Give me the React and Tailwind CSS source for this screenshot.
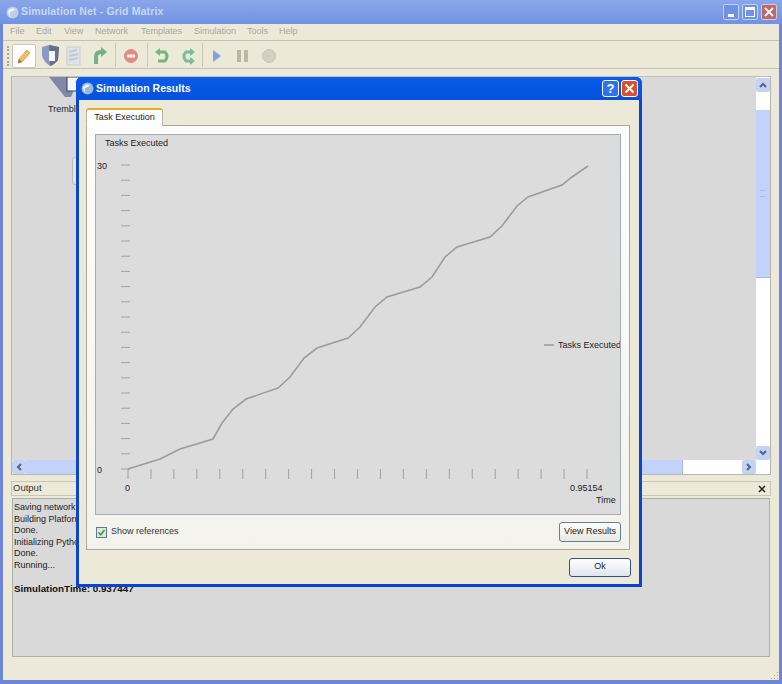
const font = { fontFamily: '"Liberation Sans", Arial, sans-serif' };

const menus = ['File', 'Edit', 'View', 'Network', 'Templates', 'Simulation', 'Tools', 'Help'];
const menuGaps = ['w-[26px]', 'w-[28px]', 'w-[31px]', 'w-[46px]', 'w-[53px]', 'w-[53px]', 'w-[32px]', 'w-[30px]'];

const outputLines = ['Saving network...', 'Building Platform...', 'Done.', 'Initializing Python...', 'Done.', 'Running...'];

const linePoints =
  '128,469 160,459 180,449 213,439 222,423 233,409 246,399 278,388 290,377 304,358 317,348 348,338 360,327 375,307 387,297 420,287 432,277 445,257 457,247 490,237 502,226 517,206 528,197 562,185 572,177 588,166';

function Separator() {
  return <div className="w-px h-[24px] bg-[#c9c6b4]" />;
}

function ToolbarIcons() {
  return (
    <svg width="270" height="24" viewBox="0 0 270 24" className="block">
      {/* shield / server */}
      <path d="M1 3 L8 1 L18 3 L17 16 Q13 21 9 22 Q3 18 1 12 Z" fill="#8a9ac4" />
      <path d="M8 1 L18 3 L17 16 Q13 21 9 22 Z" fill="#6a7088" />
      <rect x="8" y="7" width="6" height="10" fill="#f4f6fa" />
      {/* faded document */}
      <rect x="26" y="3" width="13" height="18" fill="#dfe3e4" stroke="#c8cdd0" />
      <path d="M28 8 L36 6 M28 12 L37 10 M28 16 L37 14" stroke="#bccbdc" strokeWidth="2" />
      {/* green up arrow */}
      <path d="M55 20 L55 13 Q55 8 60 8" fill="none" stroke="#6fb488" strokeWidth="4" />
      <path d="M60 3 L66 8 L60 13 Z" fill="#6fb488" />
      {/* stop */}
      <circle cx="90" cy="12" r="6.5" fill="#e28a85" stroke="#cf8f8a" />
      <rect x="86" y="10.5" width="8" height="3" fill="#f8eeee" />
      {/* undo / redo */}
      <path d="M117 8 L124 8 Q128 12 124 17 L117 17" fill="none" stroke="#72b878" strokeWidth="3" />
      <path d="M119 4 L114 8 L119 12 Z" fill="#72b878" />
      <path d="M152 8 L145 8 Q141 12 145 17 L152 17" fill="none" stroke="#78be98" strokeWidth="3" />
      <path d="M149 4 L154 8 L149 12 Z" fill="#78be98" />
      <path d="M149 13 L154 17 L149 21 Z" fill="#78be98" />
      {/* play, pause, stop */}
      <path d="M172 6 L180 12 L172 18 Z" fill="#7fa4de" />
      <rect x="196" y="6" width="4" height="12" fill="#bbb8ab" />
      <rect x="203" y="6" width="4" height="12" fill="#bbb8ab" />
      <circle cx="228" cy="12" r="6.5" fill="#d2cfc2" stroke="#c8c5b8" />
    </svg>
  );
}

function Toolbar() {
  return (
    <div className="h-[28px] flex items-center relative border-b border-[#c5c2b0] bg-[#ece9d8] pt-[2px]">
      <div className="ml-[4px] w-[2px] h-[20px] border-l-2 border-dotted border-[#a8a698]" />
      <div className="ml-[3px] w-[24px] h-[24px] bg-white border border-[#c9c6ba] rounded-[2px] flex items-center justify-center">
        <svg width="16" height="16" viewBox="0 0 16 16">
          <path d="M3 11 L11 2 L14 5 L6 14 L2 15 Z" fill="#f0c060" stroke="#d8a860" />
          <path d="M2 15 L3 11 L6 14 Z" fill="#8a7a60" />
        </svg>
      </div>
      <div className="ml-[5px]">
        <ToolbarIcons />
      </div>
      <div className="absolute left-[112px] top-[2px]"><Separator /></div>
      <div className="absolute left-[144px] top-[2px]"><Separator /></div>
      <div className="absolute left-[199px] top-[2px]"><Separator /></div>
    </div>
  );
}

function VerticalScrollbar() {
  return (
    <div className="w-[14px] flex flex-col bg-white">
      <div className="h-[14px] mt-px bg-[#c5d3f2] rounded-[2px] flex items-center justify-center text-[#52648f]">
        <svg width="8" height="6" viewBox="0 0 8 6"><path d="M1 5 L4 2 L7 5" fill="none" stroke="currentColor" strokeWidth="2" /></svg>
      </div>
      <div className="h-[18px]" />
      <div className="h-[168px] bg-[#c3d2fb] border-b border-[#a9b9e4] flex items-center justify-center">
        <div className="w-[6px] h-[7px] border-y border-[#aebde8]" />
      </div>
      <div className="flex-1" />
      <div className="h-[14px] bg-[#c5d3f2] rounded-[2px] flex items-center justify-center text-[#52648f]">
        <svg width="8" height="6" viewBox="0 0 8 6"><path d="M1 1 L4 4 L7 1" fill="none" stroke="currentColor" strokeWidth="2" /></svg>
      </div>
    </div>
  );
}

function HorizontalScrollbar() {
  return (
    <div className="h-[14px] flex bg-white">
      <div className="w-[14px] bg-[#c5d3f2] rounded-[2px] flex items-center justify-center text-[#52648f]">
        <svg width="6" height="8" viewBox="0 0 6 8"><path d="M5 1 L2 4 L5 7" fill="none" stroke="currentColor" strokeWidth="2" /></svg>
      </div>
      <div className="w-[657px] bg-[#c3d2fb] border-r border-[#a9b9e4]" />
      <div className="flex-1" />
      <div className="w-[14px] bg-[#c5d3f2] rounded-[2px] flex items-center justify-center text-[#52648f]">
        <svg width="6" height="8" viewBox="0 0 6 8"><path d="M1 1 L4 4 L1 7" fill="none" stroke="currentColor" strokeWidth="2" /></svg>
      </div>
      <div className="w-[14px]" />
    </div>
  );
}

function CanvasPanel() {
  return (
    <div className="mx-[8px] mt-[7px] h-[399px] flex flex-col border border-[#b4b7b0] border-t-[#b9bfc4] bg-[#d9d9d9]">
      <div className="flex-1 flex min-h-0">
        <div className="flex-1 relative overflow-hidden">
          <svg width="36" height="24" viewBox="0 0 36 24" className="absolute left-[37px] top-0">
            <path d="M0 0 L30 0 L22 20 L16 20 Z" fill="#8088a6" />
            <rect x="18" y="0" width="12" height="14" fill="#f4f6fa" stroke="#3a3f55" />
          </svg>
          <span className="absolute left-[36px] top-[26px] text-[9px] text-[#222]">Tremblay</span>
          <div className="absolute left-[60px] top-[80px] w-[10px] h-[28px] rounded-[3px] border border-[#bdbdb8] bg-[#e3e3e0]" />
        </div>
        <VerticalScrollbar />
      </div>
      <HorizontalScrollbar />
    </div>
  );
}

function OutputPanel() {
  return (
    <div className="mx-[8px] mt-[6px] flex flex-col">
      <div className="h-[15px] border border-[#c9c6b4] flex items-center justify-between pl-[1px] pr-[4px] bg-[#ece9d8]">
        <span className="text-[9.5px] text-[#333]">Output</span>
        <svg width="8" height="8" viewBox="0 0 8 8"><path d="M1 1 L7 7 M7 1 L1 7" stroke="#222" strokeWidth="1.5" /></svg>
      </div>
      <div className="mt-[2px] h-[159px] mx-px border border-[#aab0ac] bg-[#d9d9d9] pl-[1px] pt-[3px] text-[9px] leading-[11.6px] text-[#222]">
        {outputLines.map((line) => (
          <div key={line}>{line}</div>
        ))}
        <div className="h-[11.6px]" />
        <div className="font-bold text-[9.8px] text-[#111]">SimulationTime: 0.937447</div>
      </div>
    </div>
  );
}

function Chart() {
  const yTicks = Array.from({ length: 21 }, (_, i) => 165 + i * 15.2);
  const xTicks = Array.from({ length: 21 }, (_, i) => 128 + i * 22.95);
  return (
    <div className="h-[381px] border border-[#a3adb4] bg-[#dcdcdc]">
      <svg width="524" height="379" viewBox="96 135 524 379" className="block">
        {yTicks.map((t) => (
          <line key={t} x1="121" x2="130" y1={t} y2={t} stroke="#a2a2a2" />
        ))}
        {xTicks.map((t) => (
          <line key={t} x1={t} x2={t} y1="469" y2="479" stroke="#a0a0a0" />
        ))}
        <polyline points={linePoints} fill="none" stroke="#9c9c9c" strokeWidth="1.6" />
        <line x1="544" x2="554" y1="345" y2="345" stroke="#9c9c9c" strokeWidth="1.6" />
        <g fontSize="9" fill="#222" style={font}>
          <text x="105" y="146">Tasks Executed</text>
          <text x="97" y="169">30</text>
          <text x="97" y="473">0</text>
          <text x="125" y="491">0</text>
          <text x="570" y="491">0.95154</text>
          <text x="596" y="503">Time</text>
          <text x="558" y="348">Tasks Executed</text>
        </g>
      </svg>
    </div>
  );
}

function Dialog() {
  return (
    <div className="absolute left-[76px] top-[77px] w-[566px] h-[510px] flex flex-col rounded-t-[6px] bg-[#0a45d0] px-[3px] pb-[3px] overflow-hidden">
      <div className="h-[23px] -mx-[3px] flex items-center text-white pl-[5px] pr-[4px] bg-gradient-to-b from-[#0a5ce8] to-[#0450dc]">
        <svg width="13" height="13" viewBox="0 0 13 13">
          <circle cx="6.5" cy="6.5" r="6" fill="#9bb8d8" />
          <path d="M2 5 Q5 1 9 3 Q7 6 4 6 Q3 9 5 11 Q2 9 2 5 Z" fill="#f0f4fa" />
        </svg>
        <span className="ml-[2px] text-[10.5px] font-bold flex-1">Simulation Results</span>
        <div className="w-[17px] h-[17px] rounded-[3px] border border-white bg-[#2f72e8] flex items-center justify-center text-[13px] font-bold leading-none">?</div>
        <div className="ml-[2px] w-[17px] h-[17px] rounded-[3px] border border-white bg-[#d9502c] flex items-center justify-center">
          <svg width="11" height="11" viewBox="0 0 11 11"><path d="M1.5 1.5 L9.5 9.5 M9.5 1.5 L1.5 9.5" stroke="white" strokeWidth="2" /></svg>
        </div>
      </div>

      <div className="flex-1 bg-[#ece9d8] px-[7px] pt-[7px] flex flex-col">
        <div className="h-[18px] w-[77px] bg-white border-x border-[#b8b5a6] border-t-2 border-t-[#eda72e] rounded-t-[3px] text-[9px] text-[#222] flex items-center justify-center relative top-px z-10">
          Task Execution
        </div>
        <div className="w-[544px] h-[425px] border border-[#aca899] bg-gradient-to-b from-[#fdfdfc] to-[#f3f2ec] px-[8px] pt-[8px] flex flex-col">
          <Chart />
          <div className="flex-1 flex items-center justify-between">
            <div className="flex items-center text-[9px] text-[#333]">
              <div className="w-[11px] h-[11px] ml-px border border-[#5c7a96] bg-[#dfe8dc] flex items-center justify-center">
                <svg width="9" height="9" viewBox="0 0 9 9"><path d="M1.5 4.5 L3.7 6.8 L7.5 2" fill="none" stroke="#3da03d" strokeWidth="1.7" /></svg>
              </div>
              <span className="ml-[4px]">Show references</span>
            </div>
            <button className="w-[62px] h-[20px] rounded-[3px] border border-[#5f7f9d] bg-gradient-to-b from-white to-[#e9e7dd] text-[9px] text-[#222]">View Results</button>
          </div>
        </div>
        <div className="flex-1 flex items-center justify-end pr-px">
          <button className="w-[62px] h-[19px] rounded-[3px] border border-[#2f4f8f] bg-gradient-to-b from-white to-[#dfe5ee] text-[9px] text-[#222]">Ok</button>
        </div>
      </div>
    </div>
  );
}

export default function App() {
  return (
    <div style={font} className="relative w-[782px] h-[684px] overflow-hidden flex flex-col bg-[#6f86d8] pl-[4px] pr-[4px] pb-[4px]">
      {/* main window title bar */}
      <div className="-mx-[4px] h-[24px] flex items-center bg-gradient-to-b from-[#8aa6ea] to-[#7193e2] pl-[6px] pr-[5px]">
        <svg width="13" height="13" viewBox="0 0 13 13">
          <circle cx="6.5" cy="6.5" r="6" fill="#c0cfe6" />
          <path d="M2 5 Q5 1 9 3 Q7 6 4 6 Q3 9 5 11 Q2 9 2 5 Z" fill="#eef3fa" />
        </svg>
        <span className="ml-[2px] text-[10.5px] font-bold tracking-[0.15px] text-[#c9d7f4] flex-1">Simulation Net - Grid Matrix</span>
        <div className="w-[16px] h-[16px] rounded-[2px] border border-[#c2d0f2] bg-[#6f92e6] flex items-end pl-[4px] pb-[2px]">
          <div className="w-[6px] h-[3px] bg-white" />
        </div>
        <div className="ml-[3px] w-[16px] h-[16px] rounded-[2px] border border-[#c2d0f2] bg-[#6f92e6] flex items-center justify-center">
          <div className="w-[10px] h-[10px] border border-white border-t-[3px]" />
        </div>
        <div className="ml-[3px] w-[16px] h-[16px] rounded-[2px] border border-[#d8c8d0] bg-[#b86a70] flex items-center justify-center">
          <svg width="10" height="10" viewBox="0 0 10 10"><path d="M1 1 L9 9 M9 1 L1 9" stroke="#f4eeee" strokeWidth="2" /></svg>
        </div>
      </div>

      <div className="flex-1 bg-[#ece9d8] flex flex-col -mx-px relative">
        {/* menu */}
        <div className="h-[17px] flex items-center pl-[7px] border-b border-[#c5c2b0] text-[9px] text-[#a9a79a]">
          {menus.map((m, i) => (
            <span key={m} className={menuGaps[i]}>{m}</span>
          ))}
        </div>
        <Toolbar />
        <CanvasPanel />
        <OutputPanel />
        {/* resize grip */}
        <svg width="9" height="9" viewBox="0 0 9 9" className="absolute right-0 bottom-0">
          <path d="M7 1h1v1H7z M4 4h1v1H4z M7 4h1v1H7z M1 7h1v1H1z M4 7h1v1H4z M7 7h1v1H7z" fill="#b3b09f" />
        </svg>
      </div>

      <Dialog />
    </div>
  );
}
